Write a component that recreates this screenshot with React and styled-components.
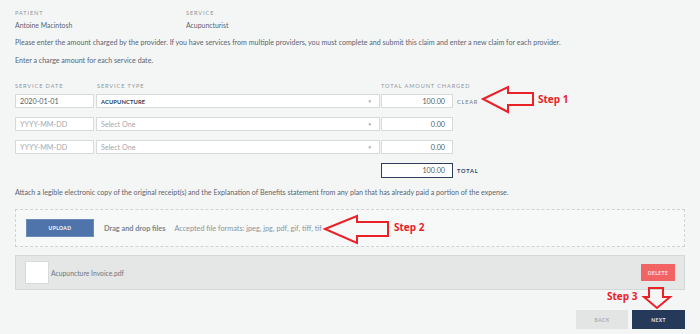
import React from "react"
import styled, { createGlobalStyle } from "styled-components"

const GlobalStyle = createGlobalStyle`
  html, body {
    margin: 0;
    padding: 0;
    background: #f4f6f6;
  }
  body {
    font-family: Lato, "Open Sans", sans-serif;
    color: #5b6470;
  }
`

const Page = styled.div`
  position: relative;
  width: 700px;
  height: 334px;
  padding: 9px 15px 0 15px;
  box-sizing: border-box;
  overflow: hidden;
`

const InfoRow = styled.div`
  display: flex;
`

const InfoCol = styled.div`
  width: ${p => p.$w || "auto"};
  display: flex;
  flex-direction: column;
  gap: 5px;
`

const Label = styled.div`
  font-size: 5.6px;
  letter-spacing: 0.9px;
  text-transform: uppercase;
  color: #8d949b;
  line-height: 7px;
  white-space: nowrap;
`

const Value = styled.div`
  font-size: 6.9px;
  color: #5b6470;
  line-height: 8px;
`

const Para = styled.p`
  margin: ${p => p.$m || "0"};
  font-size: 7.1px;
  line-height: 8px;
  color: #5b6470;
  white-space: nowrap;
`

const Grid = styled.div`
  display: grid;
  grid-template-columns: 79px 285px 72px auto;
  column-gap: 1px;
  row-gap: 9px;
  margin-top: 17px;
  align-items: center;
`

const HeadCell = styled(Label)`
  margin-bottom: -4px;
  padding-left: ${p => p.$pl || "0"};
`

const Field = styled.div`
  height: ${p => (p.$strong ? "15px" : "14px")};
  background: #fff;
  border: ${p => (p.$strong ? "1.5px solid #2c3e5a" : "1px solid #d6dada")};
  box-sizing: border-box;
  display: flex;
  align-items: center;
  justify-content: ${p => (p.$right ? "flex-end" : "space-between")};
  padding: 0 ${p => (p.$right ? "7px" : "5px")} 0 4px;
  font-size: 7.2px;
  color: ${p => (p.$muted ? "#a3a9ae" : "#555d66")};
  margin-left: ${p => p.$ml || "0"};
`

const SelectText = styled.span`
  font-size: ${p => (p.$bold ? "5.8px" : "7.2px")};
  font-weight: ${p => (p.$bold ? 700 : 400)};
  color: ${p => (p.$bold ? "#2c3e5a" : "#a3a9ae")};
  letter-spacing: ${p => (p.$bold ? "0.1px" : "0")};
`

const Caret = styled.span`
  font-size: 4.5px;
  color: #9aa0a6;
  margin-right: 2px;
`

const SideLabel = styled.span`
  font-size: 5.6px;
  letter-spacing: 0.8px;
  color: ${p => (p.$dark ? "#2c3e5a" : "#6f7780")};
  font-weight: ${p => (p.$dark ? 700 : 400)};
  padding-left: 3px;
`

const DropZone = styled.div`
  margin-top: 12px;
  height: 38px;
  border: 1px dashed #cfd3d3;
  background: #f7f8f8;
  box-sizing: border-box;
  display: flex;
  align-items: center;
  padding-left: 10px;
  gap: 10px;
`

const Button = styled.div`
  width: ${p => p.$w};
  height: ${p => p.$h};
  background: ${p => p.$bg};
  color: ${p => p.$fg};
  font-size: 5px;
  font-weight: 700;
  letter-spacing: 0.4px;
  display: flex;
  align-items: center;
  justify-content: center;
  box-sizing: border-box;
  border: ${p => p.$border || "none"};
`

const DragText = styled.span`
  font-size: 7.3px;
  font-weight: 700;
  color: #7d858c;
`

const Formats = styled.span`
  font-size: 7.3px;
  color: #8d949b;
  margin-left: -1px;
`

const FileRow = styled.div`
  margin-top: 8px;
  height: 35px;
  background: #e5e6e6;
  border: 1px solid #d5d8d8;
  box-sizing: border-box;
  display: flex;
  align-items: center;
  padding: 0 9px 0 9px;
`

const Thumb = styled.div`
  width: 24px;
  height: 23px;
  background: #fff;
  border: 1px solid #d8dbdb;
  box-sizing: border-box;
`

const FileName = styled.span`
  font-size: 6.8px;
  color: #6f7780;
  margin-left: 2px;
  flex: 1;
`

const Footer = styled.div`
  margin-top: 20px;
  display: flex;
  justify-content: flex-end;
  gap: 4px;
`

const Note = styled.div`
  position: absolute;
  left: ${p => p.$x}px;
  top: ${p => p.$y}px;
  font-family: "Open Sans", "DejaVu Sans", sans-serif;
  font-weight: 700;
  font-size: 10px;
  color: #ea2228;
  line-height: 12px;
`

const Arrow = styled.svg`
  position: absolute;
  left: 0;
  top: 0;
  pointer-events: none;
`

export default function App() {
  const rows = [
    { date: "2020-01-01", type: "ACUPUNCTURE", amt: "100.00", filled: true },
    { date: "YYYY-MM-DD", type: "Select One", amt: "0.00" },
    { date: "YYYY-MM-DD", type: "Select One", amt: "0.00" },
  ]
  return (
    <>
      <GlobalStyle />
      <Page>
        <InfoRow>
          <InfoCol $w="171px">
            <Label>Patient</Label>
            <Value>Antoine Macintosh</Value>
          </InfoCol>
          <InfoCol>
            <Label>Service</Label>
            <Value>Acupuncturist</Value>
          </InfoCol>
        </InfoRow>
        <Para $m="10px 0 0 0">
          Please enter the amount charged by the provider. If you have services from multiple providers, you must complete and submit this claim and enter a new claim for each provider.
        </Para>
        <Para $m="10px 0 0 0">Enter a charge amount for each service date.</Para>

        <Grid>
          <HeadCell>Service Date</HeadCell>
          <HeadCell $pl="2px">Service Type</HeadCell>
          <HeadCell>Total Amount Charged</HeadCell>
          <span />
          {rows.map((r, i) => (
            <React.Fragment key={i}>
              <Field $muted={!r.filled}>{r.date}</Field>
              <Field $ml="1px">
                <SelectText $bold={r.filled}>{r.type}</SelectText>
                <Caret>▼</Caret>
              </Field>
              <Field $right>{r.amt}</Field>
              {r.filled ? <SideLabel>CLEAR</SideLabel> : <span />}
            </React.Fragment>
          ))}
          <span />
          <span />
          <Field $right $strong>100.00</Field>
          <SideLabel $dark>TOTAL</SideLabel>
        </Grid>

        <Para $m="11px 0 0 0">
          Attach a legible electronic copy of the original receipt(s) and the Explanation of Benefits statement from any plan that has already paid a portion of the expense.
        </Para>

        <DropZone>
          <Button $w="68px" $h="18px" $bg="#4e74ab" $fg="#fff" $border="1px solid #6b8cbb">UPLOAD</Button>
          <DragText>Drag and drop files</DragText>
          <Formats>Accepted file formats: jpeg, jpg, pdf, gif, tiff, tif</Formats>
        </DropZone>

        <FileRow>
          <Thumb />
          <FileName>Acupuncture Invoice.pdf</FileName>
          <Button $w="34px" $h="17px" $bg="#f26464" $fg="#fde8e8">DELETE</Button>
        </FileRow>

        <Footer>
          <Button $w="52px" $h="19px" $bg="#e3e5e5" $fg="#a2adbe">BACK</Button>
          <Button $w="53px" $h="19px" $bg="#253a5a" $fg="#e6ebf2">NEXT</Button>
        </Footer>

        <Arrow width="700" height="334">
          <g fill="none" stroke="#ea2228" strokeWidth="2" strokeLinejoin="miter">
            <polygon points="483,99 508,87 508,93 533,93 533,105 508,105 508,112" />
            <polygon points="325,229 357,216 357,222 388,222 388,236 357,236 357,243" />
            <polygon points="649,288 663,288 663,297 670,297 657,308 644,297 649,297" />
          </g>
        </Arrow>
        <Note $x={538} $y={93}>Step 1</Note>
        <Note $x={394} $y={221}>Step 2</Note>
        <Note $x={607} $y={290}>Step 3</Note>
      </Page>
    </>
  )
}
